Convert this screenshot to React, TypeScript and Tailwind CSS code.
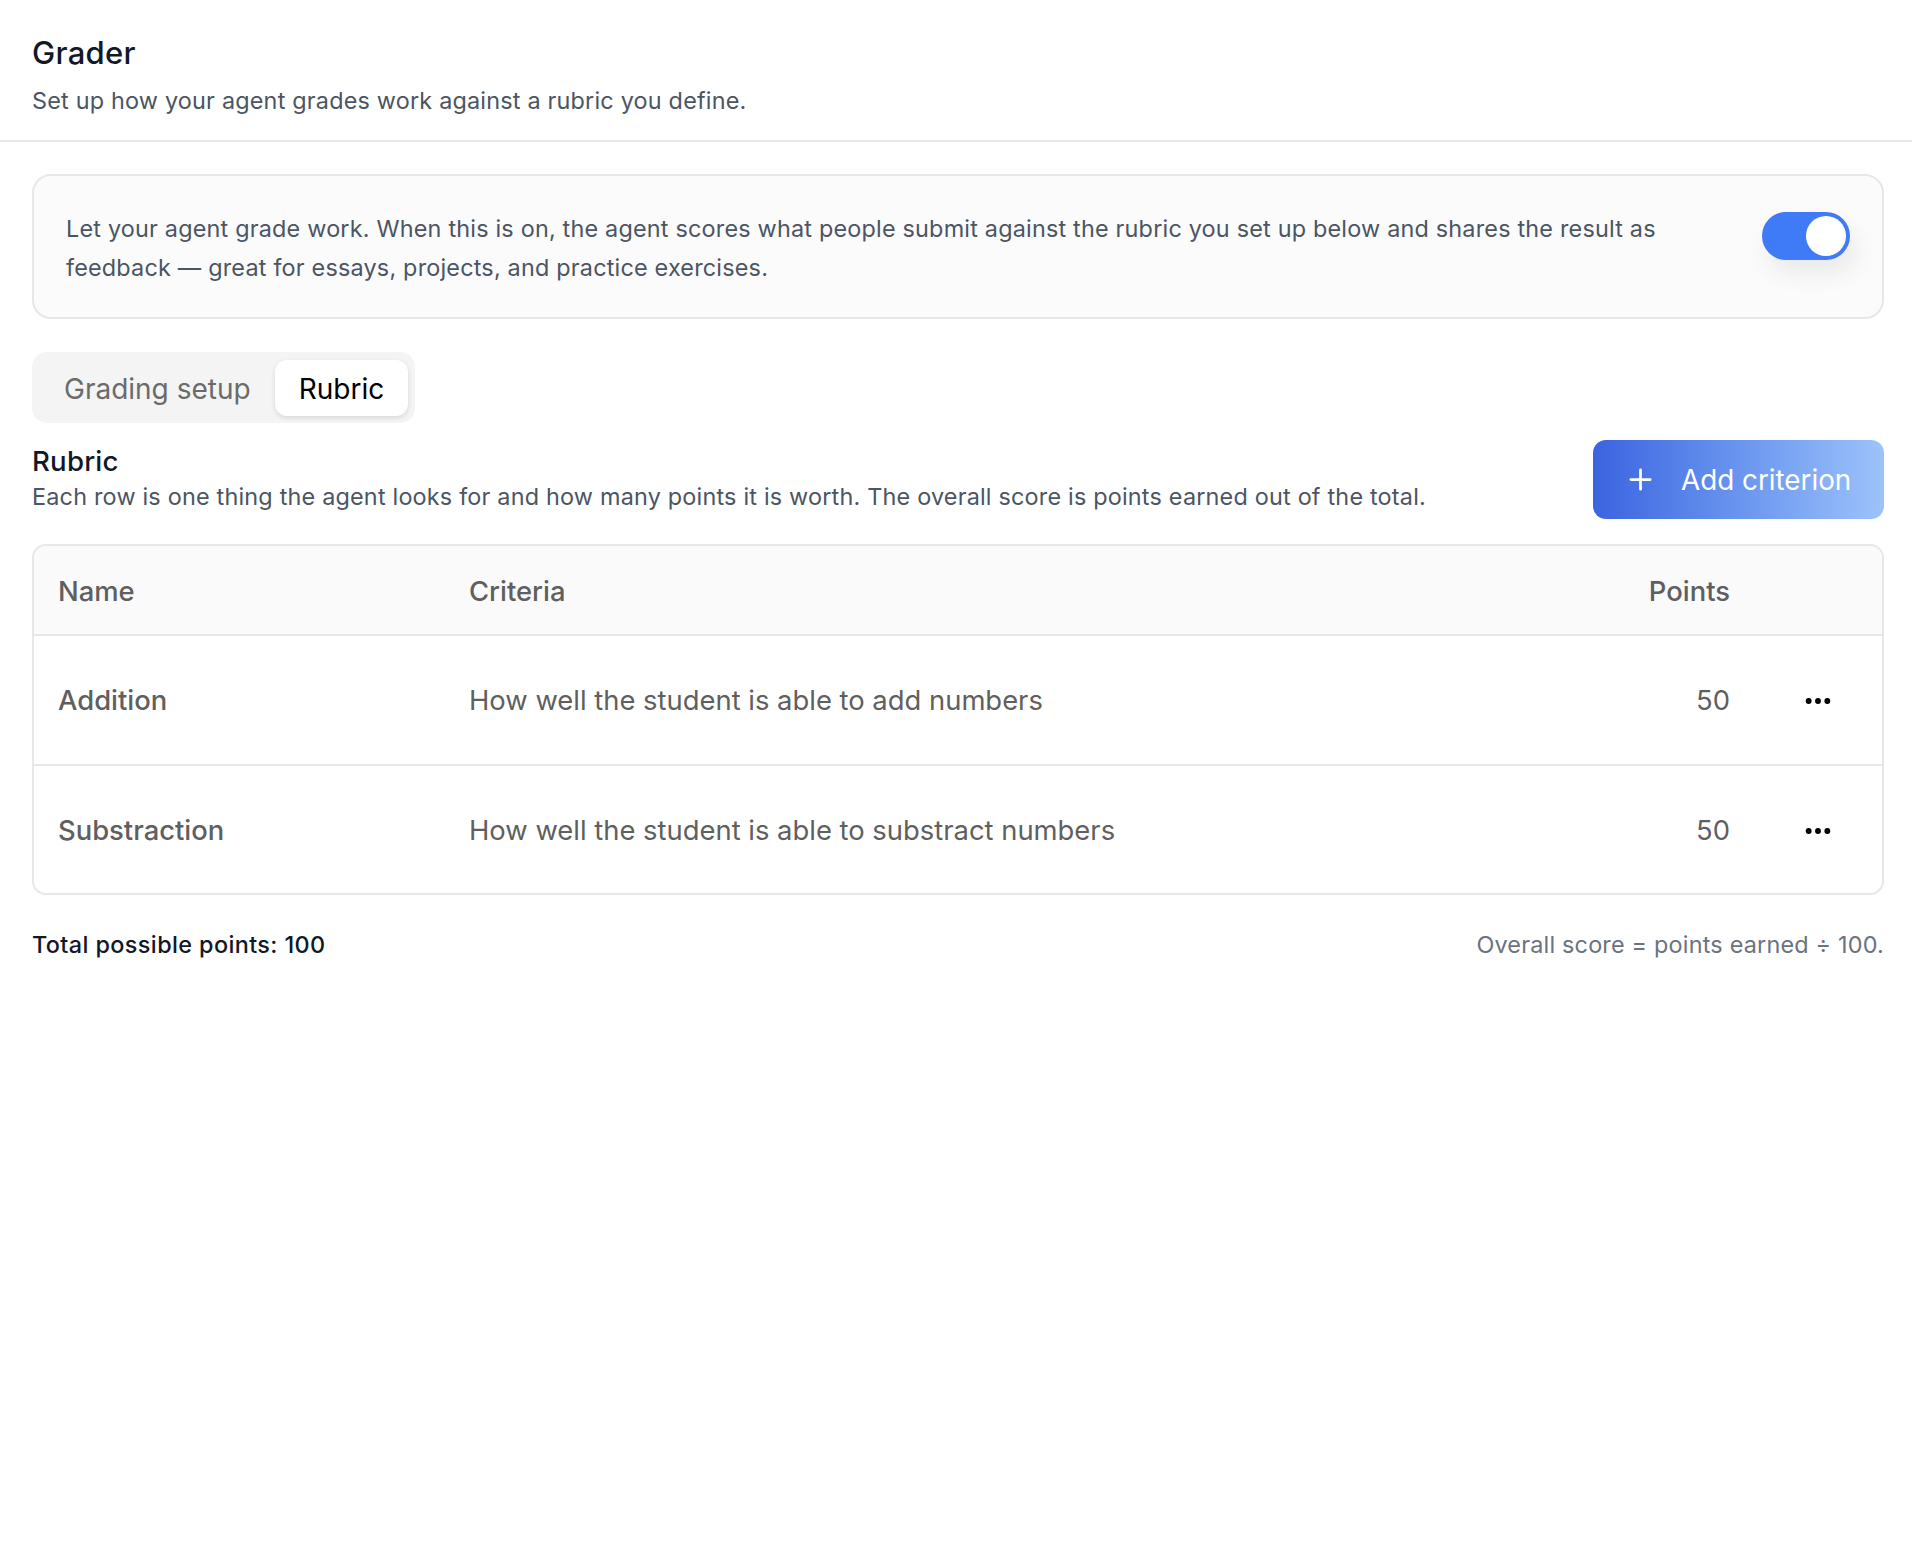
import { Plus, MoreHorizontal } from "lucide-react";

const rows = [
  { name: "Addition", criteria: "How well the student is able to add numbers", points: 50 },
  { name: "Substraction", criteria: "How well the student is able to substract numbers", points: 50 },
];

export default function App() {
  return (
    <div className="min-h-[1554px] bg-white font-['Inter',sans-serif]">
      <header className="h-[142px] border-b-2 border-[#e5e7eb] pl-8 pt-[33px]">
        <h1 className="text-[31px] leading-[40px] font-[450] tracking-[0.3px] text-[#111827]">Grader</h1>
        <p className="mt-[12px] text-[23.4px] leading-[32px] text-[#4b5563] tracking-[0.2px]">
          Set up how your agent grades work against a rubric you define.
        </p>
      </header>
      <main className="pl-8 pr-7 pt-8">
        <section className="flex h-[145px] items-start justify-between rounded-[19px] border-2 border-[#e5e7eb] bg-[#fbfbfc] pl-8 pr-8 pt-[36px]">
          <p className="w-[1620px] -mt-[3px] text-[23.4px] leading-[39px] text-[#4b5563] tracking-[0.2px]">
            Let your agent grade work. When this is on, the agent scores what people submit against the rubric you set up below and shares the result as feedback — great for essays, projects, and practice exercises.
          </p>
          <button className="flex h-12 w-[88px] items-center justify-end rounded-full bg-[#3f7bf6] pr-1 shadow-[6px_14px_24px_rgba(0,0,0,0.07)]">
            <span className="h-10 w-10 rounded-full bg-white" />
          </button>
        </section>

        <div className="mt-[33px] flex h-[71px] w-[383px] items-center justify-between rounded-[15px] bg-[#f4f4f5] pl-8 pr-[7px]">
          <span className="pt-[3px] text-[28px] text-[#6b6b6b]">Grading setup</span>
          <span className="flex h-14 w-[133px] items-center justify-center rounded-[12px] bg-white pt-[3px] text-[28px] text-black shadow-[0_2px_5px_rgba(0,0,0,0.12)]">Rubric</span>
        </div>

        <div className="mt-[17px] flex h-[79px] items-center justify-between">
          <div className="-mt-[2px]">
            <h2 className="text-[27.6px] leading-[36px] font-[450] tracking-[0.2px] text-[#111827]">Rubric</h2>
            <p className="text-[23.4px] leading-[36px] text-[#4b5563] tracking-[0.2px]">
              Each row is one thing the agent looks for and how many points it is worth. The overall score is points earned out of the total.
            </p>
          </div>
          <button className="flex h-[79px] w-[291px] items-center gap-[24px] rounded-[13px] bg-gradient-to-r from-[#3b63e0] to-[#9dc3fa] pl-[31px] text-[27.8px] text-white">
            <Plus size={33} strokeWidth={2} />
            <span className="pt-[2px]">Add criterion</span>
          </button>
        </div>

        <div className="mt-[25px] overflow-hidden rounded-[14px] border-2 border-[#e5e7eb] text-[27.4px] text-[#5f5f5f]">
          <div className="flex h-[90px] items-center border-b-2 border-[#e5e7eb] bg-[#fafafa] pl-6 pt-[3px] font-[450]">
            <span className="w-[411px]">Name</span>
            <span className="flex-1">Criteria</span>
            <span className="mr-[152px]">Points</span>
          </div>
          {rows.map((r, i) => (
            <div key={r.name} className={`flex items-center pl-6 pt-[2px] ${i === 0 ? "h-[130px] border-b-2 border-[#e5e7eb]" : "h-[127px]"}`}>
              <span className="w-[411px] font-[450]">{r.name}</span>
              <span className="flex-1">{r.criteria}</span>
              <span className="mr-[72px]">{r.points}</span>
              <MoreHorizontal size={32} strokeWidth={2.4} className="mr-[48px] text-black" />
            </div>
          ))}
        </div>

        <div className="mt-[36px] flex items-center justify-between text-[23.4px] leading-[28px]">
          <span className="font-[450] tracking-[0.4px] text-[#111827]">Total possible points: 100</span>
          <span className="tracking-[0.2px] text-[#6b7280]">Overall score = points earned ÷ 100.</span>
        </div>
      </main>
    </div>
  );
}
